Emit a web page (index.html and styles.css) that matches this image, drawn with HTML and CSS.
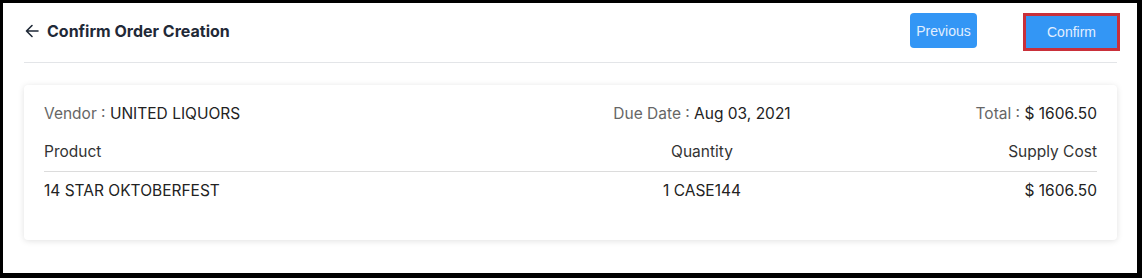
FILE: index.html
```html
<!DOCTYPE html>
<html>
<head>
<meta charset="utf-8">
<link rel="stylesheet" href="styles.css">
</head>
<body>
<div class="frame">
  <div class="header">
    <div class="title">
      <svg class="back" width="14" height="14" viewBox="0 0 14 14"><path d="M13 7H1.5M7 1.5L1.5 7L7 12.5" fill="none" stroke="#1f2937" stroke-width="1.6" stroke-linecap="round" stroke-linejoin="round"/></svg>
      <span>Confirm Order Creation</span>
    </div>
    <div class="actions">
      <button class="btn btn-prev">Previous</button>
      <button class="btn btn-confirm">Confirm</button>
    </div>
  </div>
  <div class="card">
    <div class="grid summary">
      <div><span class="label">Vendor :</span> UNITED LIQUORS</div>
      <div class="mid"><span class="label">Due Date :</span> Aug 03, 2021</div>
      <div class="end"><span class="label">Total :</span> $ 1606.50</div>
    </div>
    <div class="grid thead">
      <div>Product</div>
      <div class="mid">Quantity</div>
      <div class="end">Supply Cost</div>
    </div>
    <div class="grid trow">
      <div>14 STAR OKTOBERFEST</div>
      <div class="mid">1 CASE144</div>
      <div class="end">$ 1606.50</div>
    </div>
  </div>
</div>
</body>
</html>
```
FILE: styles.css
```css
html, body {
  margin: 0;
  padding: 0;
  background: #000;
}
.frame {
  box-sizing: border-box;
  width: 1142px;
  height: 278px;
  background: #fff;
  border-style: solid;
  border-color: #000;
  border-width: 3px 5px 5px 3px;
  padding: 10px 20px 0 21px;
  font-family: Inter, "Noto Sans", sans-serif;
}
.header {
  display: flex;
  justify-content: space-between;
  align-items: flex-start;
  height: 49px;
  border-bottom: 1px solid #e3e5e8;
}
.title {
  display: flex;
  align-items: center;
  height: 36px;
  gap: 8px;
  font-size: 16px;
  font-weight: 700;
  color: #1f2937;
  padding-left: 1px;
}
.back { display: block; }
.actions {
  display: flex;
  align-items: flex-start;
  gap: 46px;
  margin-right: -3px;
}
.btn {
  font-family: "Liberation Sans", Arial, sans-serif;
  font-size: 14px;
  color: #e2efff;
  background: #3396f5;
  border: none;
  border-radius: 4px;
  cursor: pointer;
  padding: 0;
}
.btn-prev {
  width: 67px;
  height: 35px;
  margin-left: 1px;
}
.btn-confirm {
  width: 97px;
  height: 38px;
  border: 3px solid #c9303a;
  border-radius: 0;
}
.card {
  margin-top: 22px;
  height: 155px;
  box-sizing: border-box;
  border-radius: 4px;
  background: #fff;
  box-shadow: 0 1px 6px rgba(0,0,0,0.12);
  padding: 18px 20px 0 20px;
  font-size: 15.5px;
  color: #222;
}
.grid {
  display: grid;
  grid-template-columns: 558px 200px 1fr;
  line-height: 22px;
}
.mid { text-align: center; }
.end { text-align: right; }
.label { color: #666; }
.thead {
  padding: 16px 0 8px;
  border-bottom: 1px solid #dcdcdc;
  color: #333;
}
.trow {
  padding-top: 8px;
}
```
